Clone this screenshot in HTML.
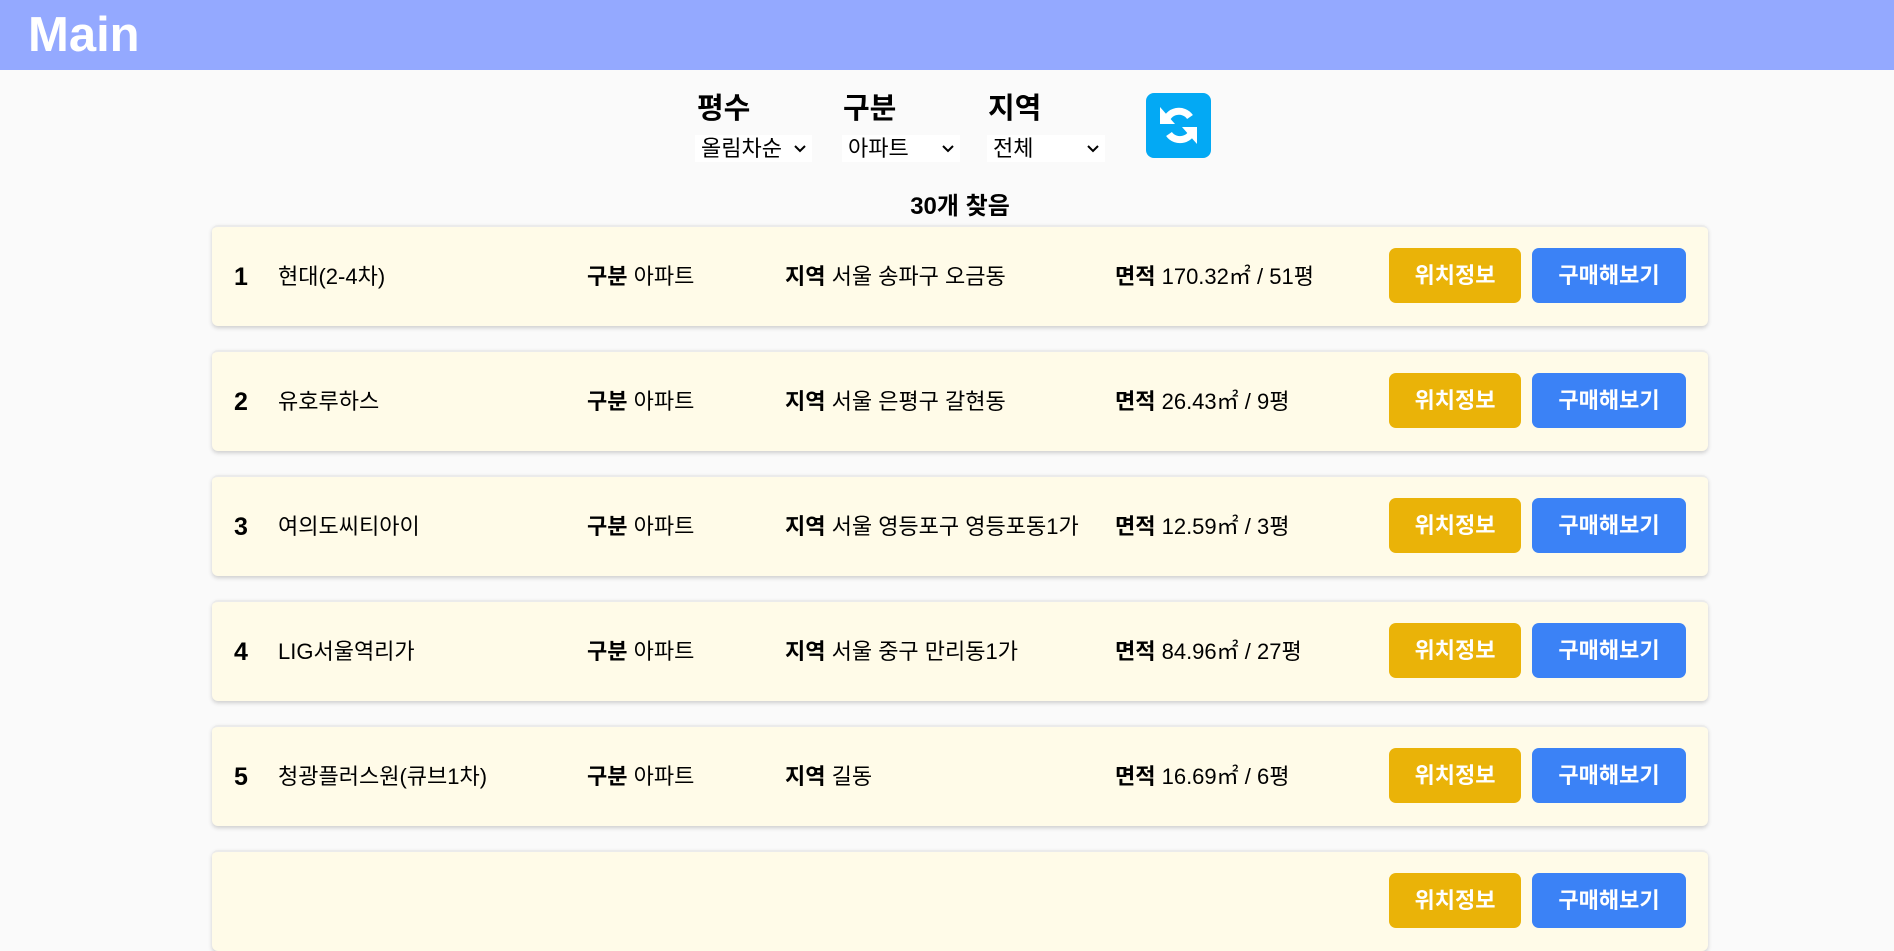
<!DOCTYPE html>
<html><head><meta charset="utf-8"><style>
*{box-sizing:border-box;margin:0;padding:0}
body{width:1894px;height:883px;overflow:hidden;background:#fafafa;font-family:"Liberation Sans","Noto Sans CJK KR",sans-serif;color:#000;position:relative}
.hdr{position:absolute;left:0;top:0;width:1894px;height:70px;background:#94a9ff}
.hdr h1{position:absolute;left:28px;top:7px;font-size:49px;font-weight:bold;color:#fff;line-height:56px}
.lbl{position:absolute;top:92px;font-size:29px;font-weight:bold;line-height:34px}
.sel{position:absolute;top:135px;height:27px;background:#fff;font-size:22px;line-height:27px;padding-left:6px}
.sel svg{position:absolute;right:6px;top:10px}
.ref{position:absolute;left:1146px;top:93px;width:65px;height:65px;background:#03a9f4;border-radius:8px}
.cnt{position:absolute;left:0;width:1920px;top:192px;text-align:center;font-size:24px;font-weight:bold;line-height:30px}
.card{position:absolute;left:212px;width:1496px;height:101px;background:#fffbe8;border-radius:6px;box-shadow:0 2px 4px rgba(0,0,0,.18);border-top:2px solid #ebebeb}
.card span{position:absolute;top:36px;font-size:22px;line-height:28px;white-space:nowrap}
.n{left:22px;font-weight:bold;font-size:25px!important}
.btn{position:absolute;top:21px;height:55px;border-radius:7px;color:#fff;font-weight:bold;font-size:22px;text-align:center;line-height:55px}
.y{left:1177px;width:132px;background:#eab308}
.bl{left:1320px;width:154px;background:#3b82f6}
</style></head><body>
<div class="hdr"><h1>Main</h1></div>
<div class="lbl" style="left:697px">평수</div>
<div class="lbl" style="left:843px">구분</div>
<div class="lbl" style="left:988px">지역</div>
<div class="sel" style="left:695px;width:117px">올림차순<svg width="12" height="8"><path d="M1 1l5 5 5-5" stroke="#000" stroke-width="2" fill="none"/></svg></div>
<div class="sel" style="left:842px;width:118px">아파트<svg width="12" height="8"><path d="M1 1l5 5 5-5" stroke="#000" stroke-width="2" fill="none"/></svg></div>
<div class="sel" style="left:987px;width:118px">전체<svg width="12" height="8"><path d="M1 1l5 5 5-5" stroke="#000" stroke-width="2" fill="none"/></svg></div>
<div class="ref"><svg width="65" height="65" viewBox="0 0 65 65"><path d="M20 29a13 12 0 0 1 24-5" stroke="#fff" stroke-width="7" fill="none"/><path d="M47 35a13 12 0 0 1-24 6" stroke="#fff" stroke-width="7" fill="none"/><path d="M14 14l0 17 15 0z" fill="#fff"/><path d="M51 51l0-17-15 0z" fill="#fff"/></svg></div>
<div class="cnt">30개 찾음</div>

<div class="card" style="top:225px"><span class="n">1</span><span style="left:66px">현대(2-4차)</span><span style="left:375px"><b>구분</b> 아파트</span><span style="left:573px"><b>지역</b> 서울 송파구 오금동</span><span style="left:903px"><b>면적</b> 170.32㎡ / 51평</span><div class="btn y">위치정보</div><div class="btn bl">구매해보기</div></div>
<div class="card" style="top:350px"><span class="n">2</span><span style="left:66px">유호루하스</span><span style="left:375px"><b>구분</b> 아파트</span><span style="left:573px"><b>지역</b> 서울 은평구 갈현동</span><span style="left:903px"><b>면적</b> 26.43㎡ / 9평</span><div class="btn y">위치정보</div><div class="btn bl">구매해보기</div></div>
<div class="card" style="top:475px"><span class="n">3</span><span style="left:66px">여의도씨티아이</span><span style="left:375px"><b>구분</b> 아파트</span><span style="left:573px"><b>지역</b> 서울 영등포구 영등포동1가</span><span style="left:903px"><b>면적</b> 12.59㎡ / 3평</span><div class="btn y">위치정보</div><div class="btn bl">구매해보기</div></div>
<div class="card" style="top:600px"><span class="n">4</span><span style="left:66px">LIG서울역리가</span><span style="left:375px"><b>구분</b> 아파트</span><span style="left:573px"><b>지역</b> 서울 중구 만리동1가</span><span style="left:903px"><b>면적</b> 84.96㎡ / 27평</span><div class="btn y">위치정보</div><div class="btn bl">구매해보기</div></div>
<div class="card" style="top:725px"><span class="n">5</span><span style="left:66px">청광플러스원(큐브1차)</span><span style="left:375px"><b>구분</b> 아파트</span><span style="left:573px"><b>지역</b> 길동</span><span style="left:903px"><b>면적</b> 16.69㎡ / 6평</span><div class="btn y">위치정보</div><div class="btn bl">구매해보기</div></div>
<div class="card" style="top:850px"><div class="btn y">위치정보</div><div class="btn bl">구매해보기</div></div>
</body></html>
